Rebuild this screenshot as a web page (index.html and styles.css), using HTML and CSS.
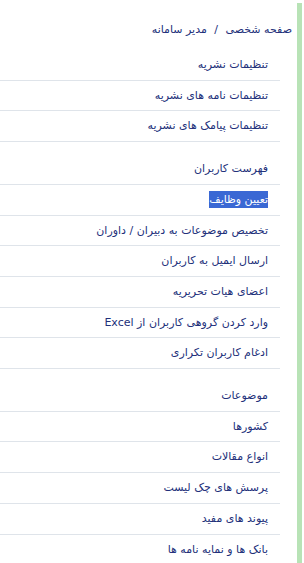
FILE: index.html
```html
<!DOCTYPE html>
<html lang="fa" dir="rtl">

<head>
    <meta charset="UTF-8">
    <meta name="viewport" content="width=device-width, initial-scale=1.0">
    <title>مدیر سامانه</title>
    <link rel="stylesheet" href="styles.css">
</head>

<body>
    <div class="page">
        <div class="accent"></div>

        <div class="sidebar">
            <div class="breadcrumb">
                <a href="#">صفحه شخصی</a>
                <span class="sep">/</span>
                <span>مدیر سامانه</span>
            </div>

            <ul class="menu-group">
                <li><a href="#">تنظیمات نشریه</a></li>
                <li><a href="#">تنظیمات نامه های نشریه</a></li>
                <li><a href="#">تنظیمات پیامک های نشریه</a></li>
            </ul>

            <ul class="menu-group">
                <li><a href="#">فهرست کاربران</a></li>
                <li><a href="#"><span class="selected">تعیین وظایف</span></a></li>
                <li><a href="#">تخصیص موضوعات به دبیران / داوران</a></li>
                <li><a href="#">ارسال ایمیل به کاربران</a></li>
                <li><a href="#">اعضای هیات تحریریه</a></li>
                <li><a href="#">وارد کردن گروهی کاربران از Excel</a></li>
                <li><a href="#">ادغام کاربران تکراری</a></li>
            </ul>

            <ul class="menu-group">
                <li><a href="#">موضوعات</a></li>
                <li><a href="#">کشورها</a></li>
                <li><a href="#">انواع مقالات</a></li>
                <li><a href="#">پرسش های چک لیست</a></li>
                <li><a href="#">پیوند های مفید</a></li>
                <li><a href="#">بانک ها و نمایه نامه ها</a></li>
            </ul>
        </div>
    </div>
</body>

</html>
```

FILE: styles.css
```css
* {
    margin: 0;
    padding: 0;
    box-sizing: border-box;
}

body {
    font-family: 'DejaVu Sans', sans-serif;
    font-size: 11px;
    color: #22307a;
    background: #ffffff;
}

a {
    color: inherit;
    text-decoration: none;
}

.page {
    display: flex;
    direction: rtl;
    min-height: 563px;
}

.accent {
    width: 5px;
    margin-top: 3px;
    margin-right: 2px;
    background-color: #b8e3b6;
}

.sidebar {
    flex: 1;
    padding-top: 20px;
}

.breadcrumb {
    line-height: 20px;
    padding-right: 5px;
    margin-bottom: 10px;
}

.breadcrumb .sep {
    margin: 0 4px;
}

.menu-group {
    list-style: none;
    margin-left: 0;
    margin-right: 17px;
}

.menu-group + .menu-group {
    margin-top: 12px;
}

.menu-group li {
    border-bottom: 1px solid #dfe4ea;
    padding: 5px 12px 5px 0;
    line-height: 19.7px;
}

.selected {
    background-color: #3a68d4;
    color: #ffffff;
    padding: 2px 0;
}
```
